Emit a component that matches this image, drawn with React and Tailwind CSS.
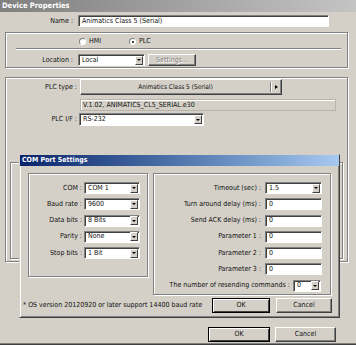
import React from 'react';

const raised =
  'bg-[#d4d0c8] border border-t-white border-l-white border-b-[#404040] border-r-[#404040] shadow-[inset_-1px_-1px_0_#808080]';
const sunken =
  'bg-white border border-t-[#808080] border-l-[#808080] border-b-white border-r-white shadow-[inset_1px_1px_0_#404040]';
const etched = 'border border-[#808080] shadow-[1px_1px_0_#fff,inset_1px_1px_0_#fff]';

const Field = ({ value, className = '' }) => (
  <div className={`h-[12px] flex items-center pl-[3px] ${sunken} ${className}`}>
    <span className="leading-none">{value}</span>
  </div>
);

const Select = ({ value, className = '' }) => (
  <div className={`h-[12px] flex items-center pl-[3px] ${sunken} ${className}`}>
    <span className="leading-none">{value}</span>
    <div className="ml-auto mr-[1px] h-[9px] w-[8px] bg-[#d4d0c8] border border-t-white border-l-white border-b-[#404040] border-r-[#404040] flex items-center justify-center">
      <div className="border-x-[2px] border-x-transparent border-t-[2px] border-t-black" />
    </div>
  </div>
);

const Button = ({ children, isDefault, className = '' }) => (
  <div
    className={`flex items-center justify-center leading-none ${
      isDefault
        ? 'bg-[#d4d0c8] border border-black shadow-[inset_1px_1px_0_#fff,inset_-1px_-1px_0_#404040]'
        : raised
    } ${className}`}
  >
    {children}
  </div>
);

const Radio = ({ checked }) => (
  <div className="w-[7px] h-[7px] rounded-full bg-white border border-t-[#808080] border-l-[#808080] border-b-white border-r-white flex items-center justify-center">
    {checked && <div className="w-[2px] h-[2px] rounded-full bg-black" />}
  </div>
);

const Row = ({ label, labelW, gap, children }) => (
  <div className="flex items-center">
    <div className="text-right leading-none whitespace-nowrap" style={{ width: labelW, marginRight: gap }}>
      {label}
    </div>
    {children}
  </div>
);

export default function App() {
  return (
    <div className="relative w-[356px] h-[345px] overflow-hidden bg-[#d4d0c8] text-[#101010] text-[7px] font-['DejaVu_Sans_Condensed','Liberation_Sans',sans-serif]">
      {/* Title */}
      <div className="h-[12px] flex items-center pl-[2px] bg-gradient-to-r from-[#808080] to-[#c4c4c4] text-white text-[7.5px] font-bold leading-none">
        Device Properties
      </div>

      {/* Name */}
      <div className="mt-[3px]">
        <Row label="Name :" labelW={73} gap={5}>
          <Field value="Animatics Class 5 (Serial)" className="w-[251px]" />
        </Row>
      </div>

      {/* Group 1 */}
      <div className={`ml-[5px] mt-[5px] w-[343px] h-[36px] ${etched}`}>
        <div className="mt-[5px] flex items-center">
          <div className="ml-[73px]"><Radio /></div>
          <span className="ml-[3px] leading-none">HMI</span>
          <div className="ml-[28px]"><Radio checked /></div>
          <span className="ml-[3px] leading-none">PLC</span>
        </div>
        <div className="ml-[10px] mt-[3px] w-[325px] h-[2px] border-t border-t-[#808080] border-b border-b-white" />
        <div className="mt-[4px] flex items-center">
          <Row label="Location :" labelW={67} gap={5}>
            <Select value="Local" className="w-[67px]" />
          </Row>
          <Button className="ml-[3px] w-[48px] h-[12px] text-[#808080] [text-shadow:1px_1px_0_#fff]">Settings...</Button>
        </div>
      </div>

      {/* Group 2 */}
      <div className={`ml-[5px] mt-[9px] w-[343px] h-[185px] ${etched}`}>
        <div className="mt-[1px]">
          <Row label="PLC type :" labelW={71} gap={3}>
            <Button className="w-[202px] h-[16px]">
              <span className="flex-1 text-center text-[6.5px]">Animatics Class 5 (Serial)</span>
              <div className="w-[2px] h-[10px] border-l border-l-[#808080] border-r border-r-white" />
              <div className="mx-[3px] border-y-[2px] border-y-transparent border-l-[3px] border-l-black" />
            </Button>
          </Row>
        </div>
        <div className="ml-[74px] mt-[4px] w-[256px] h-[12px] flex items-center pl-[2px] border border-[#b8b4ac] shadow-[inset_1px_1px_0_#fff] leading-none">
          V.1.02, ANIMATICS_CL5_SERIAL.e30
        </div>
        <div className="mt-[2px]">
          <Row label="PLC I/F :" labelW={71} gap={2}>
            <Select value="RS-232" className="w-[125px] h-[13px]" />
          </Row>
        </div>
        <div className={`ml-[4px] mt-[36px] w-[333px] h-[97px] ${etched}`} />
      </div>

      {/* Bottom buttons */}
      <div className="mt-[65px] flex">
        <Button isDefault className="ml-[208px] w-[62px] h-[15px]">OK</Button>
        <Button className="ml-[5px] w-[61px] h-[15px]">Cancel</Button>
      </div>
      <div className="absolute bottom-0 left-0 right-0 h-[2px] bg-[#808080] border-b border-b-[#404040]" />

      {/* COM Port Settings dialog */}
      <div className="absolute left-[19px] top-[154px] w-[321px] h-[164px] bg-[#d4d0c8] border border-t-[#d4d0c8] border-l-[#d4d0c8] border-b-[#404040] border-r-[#404040] shadow-[inset_1px_1px_0_#fff,inset_-1px_-1px_0_#808080]">
        <div className="h-[11px] flex items-center pl-[2px] bg-gradient-to-r from-[#0a246a] to-[#a6caf0] text-white font-bold leading-none">
          COM Port Settings
        </div>
        <div className="mt-[7px] flex items-start">
          <div className={`ml-[8px] w-[120px] h-[104px] pt-[8px] flex flex-col gap-[4.25px] ${etched}`}>
            <Row label="COM :" labelW={53} gap={2}><Select value="COM 1" className="w-[56px]" /></Row>
            <Row label="Baud rate :" labelW={53} gap={2}><Select value="9600" className="w-[56px]" /></Row>
            <Row label="Data bits :" labelW={53} gap={2}><Select value="8 Bits" className="w-[56px]" /></Row>
            <Row label="Parity :" labelW={53} gap={2}><Select value="None" className="w-[56px]" /></Row>
            <Row label="Stop bits :" labelW={53} gap={2}><Select value="1 Bit" className="w-[56px]" /></Row>
          </div>
          <div className={`ml-[5px] w-[178px] h-[122px] pt-[8px] flex flex-col gap-[4.25px] ${etched}`}>
            <Row label="Timeout (sec) :" labelW={107} gap={4}><Select value="1.5" className="w-[57px]" /></Row>
            <Row label="Turn around delay (ms) :" labelW={107} gap={4}><Field value="0" className="w-[57px]" /></Row>
            <Row label="Send ACK delay (ms) :" labelW={107} gap={4}><Field value="0" className="w-[57px]" /></Row>
            <Row label="Parameter 1 :" labelW={107} gap={4}><Field value="0" className="w-[57px]" /></Row>
            <Row label="Parameter 2 :" labelW={107} gap={4}><Field value="0" className="w-[57px]" /></Row>
            <Row label="Parameter 3 :" labelW={107} gap={4}><Field value="0" className="w-[57px]" /></Row>
            <Row label="The number of resending commands :" labelW={136} gap={3}><Select value="0" className="w-[28px]" /></Row>
          </div>
        </div>
        <div className="mt-[3px] flex items-center">
          <span className="ml-[3px] leading-none whitespace-nowrap">* OS version 20120920 or later support 14400 baud rate</span>
          <Button isDefault className="ml-auto w-[58px] h-[15px]">OK</Button>
          <Button className="ml-[6px] mr-[7px] w-[56px] h-[15px]">Cancel</Button>
        </div>
      </div>
    </div>
  );
}
